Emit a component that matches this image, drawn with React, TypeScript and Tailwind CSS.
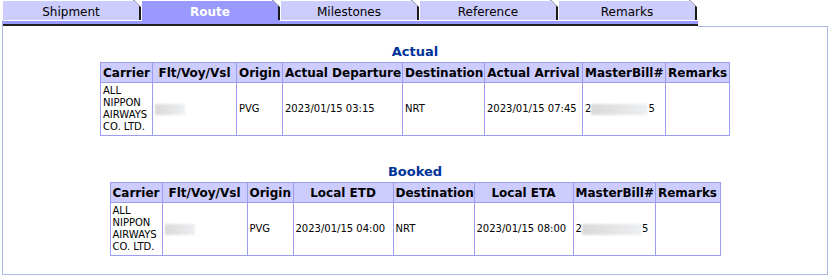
import React from 'react'

const tabs = ['Shipment', 'Route', 'Milestones', 'Reference', 'Remarks']

type Col = { label: string; w: string }

const actualCols: Col[] = [
  { label: 'Carrier', w: 'w-[52px]' },
  { label: 'Flt/Voy/Vsl', w: 'w-[84px]' },
  { label: 'Origin', w: 'w-[46px]' },
  { label: 'Actual Departure', w: 'w-[120px]' },
  { label: 'Destination', w: 'w-[82px]' },
  { label: 'Actual Arrival', w: 'w-[98px]' },
  { label: 'MasterBill#', w: 'w-[83px]' },
  { label: 'Remarks', w: 'w-[64px]' },
]

const bookedCols: Col[] = [
  { label: 'Carrier', w: 'w-[52px]' },
  { label: 'Flt/Voy/Vsl', w: 'w-[85px]' },
  { label: 'Origin', w: 'w-[46px]' },
  { label: 'Local ETD', w: 'w-[100px]' },
  { label: 'Destination', w: 'w-[81px]' },
  { label: 'Local ETA', w: 'w-[99px]' },
  { label: 'MasterBill#', w: 'w-[82px]' },
  { label: 'Remarks', w: 'w-[65px]' },
]

function Tab({ label, active }: { label: string; active: boolean }) {
  return (
    <div className="flex w-[139px] flex-col">
      <div
        className={`relative mt-px flex h-[19px] w-[138px] items-center justify-center border-r-2 border-[#1a1a1a] pt-[3px] text-[12px] leading-[15px] ${
          active ? 'bg-[#9999ff] font-bold text-white' : 'bg-[#ccccff] text-black'
        }`}
      >
        {label}
        <svg className="absolute -right-[2px] -top-px" width="8" height="7" viewBox="0 0 8 7">
          <path d="M0 0H8V7Z" fill="#fff" />
          <path d="M0 0.5H1.5L7 6.5" stroke="#9a9aaa" fill="none" />
        </svg>
      </div>
      <div className={`h-px w-[138px] ${active ? 'bg-[#9999ff]' : 'bg-white'}`} />
    </div>
  )
}

// blurred-out value
function Blur({ w }: { w: string }) {
  return (
    <span
      className={`inline-block h-[11px] ${w} align-middle bg-linear-to-r from-[#d9d9d9] via-[#e4e4e4] to-[#eef0f4] blur-[1px]`}
    />
  )
}

function RouteTable({
  cols,
  width,
  departure,
  arrival,
  blurW,
}: {
  cols: Col[]
  width: string
  departure: string
  arrival: string
  blurW: string
}) {
  const td = 'border border-[#9c9cf0] px-[2px] py-[2px] text-left align-middle text-[10px] leading-[12px]'
  return (
    <table className={`mx-auto table-fixed border-collapse ${width}`}>
      <colgroup>
        {cols.map((c) => (
          <col key={c.label} className={c.w} />
        ))}
      </colgroup>
      <thead>
        <tr>
          {cols.map((c) => (
            <th
              key={c.label}
              className="whitespace-nowrap border border-[#9c9cf0] bg-[#ccccff] px-[2px] pt-[3px] pb-[1px] text-center text-[12px] leading-[15px] font-bold"
            >
              {c.label}
            </th>
          ))}
        </tr>
      </thead>
      <tbody>
        <tr>
          <td className={td}>ALL NIPPON AIRWAYS CO. LTD.</td>
          <td className={td}>
            <Blur w="w-[30px]" />
          </td>
          <td className={td}>PVG</td>
          <td className={`${td} whitespace-nowrap`}>{departure}</td>
          <td className={td}>NRT</td>
          <td className={`${td} whitespace-nowrap`}>{arrival}</td>
          <td className={`${td} whitespace-nowrap`}>
            2<Blur w={blurW} />5
          </td>
          <td className={td}></td>
        </tr>
      </tbody>
    </table>
  )
}

export default function App() {
  return (
    <div className="h-[280px] w-[833px] overflow-hidden bg-white font-['Verdana','DejaVu_Sans',sans-serif] text-black">
      {/* TABS */}
      <div className="flex h-[27px]">
        <div className="w-[2px]" />
        <div className="h-[7px] w-px self-end bg-[#a9b8e6]" />
        <div className="flex w-[695px] flex-col self-start">
          <div className="flex">
            {tabs.map((t) => (
              <Tab key={t} label={t} active={t === 'Route'} />
            ))}
          </div>
          <div className="h-[3px] bg-[#9999ff]" />
          <div className="h-[2px] bg-[#1f1f1f]" />
        </div>
        <div className="h-px flex-1 self-end bg-[#a9b8e6]" />
        <div className="w-[5px]" />
      </div>

      {/* PANEL */}
      <div className="ml-[2px] h-[248px] w-[826px] border-x border-b border-[#a9b8e6] pt-[17px]">
        <h2 className="text-center text-[13px] leading-[16px] font-bold text-[#003399]">Actual</h2>
        <div className="mt-[2px]">
          <RouteTable
            cols={actualCols}
            width="w-[630px]"
            departure="2023/01/15 03:15"
            arrival="2023/01/15 07:45"
            blurW="w-[57px]"
          />
        </div>

        <h2 className="mt-[28px] text-center text-[13px] leading-[16px] font-bold text-[#003399]">Booked</h2>
        <div className="mt-[2px]">
          <RouteTable
            cols={bookedCols}
            width="w-[611px]"
            departure="2023/01/15 04:00"
            arrival="2023/01/15 08:00"
            blurW="w-[60px]"
          />
        </div>
      </div>
    </div>
  )
}
